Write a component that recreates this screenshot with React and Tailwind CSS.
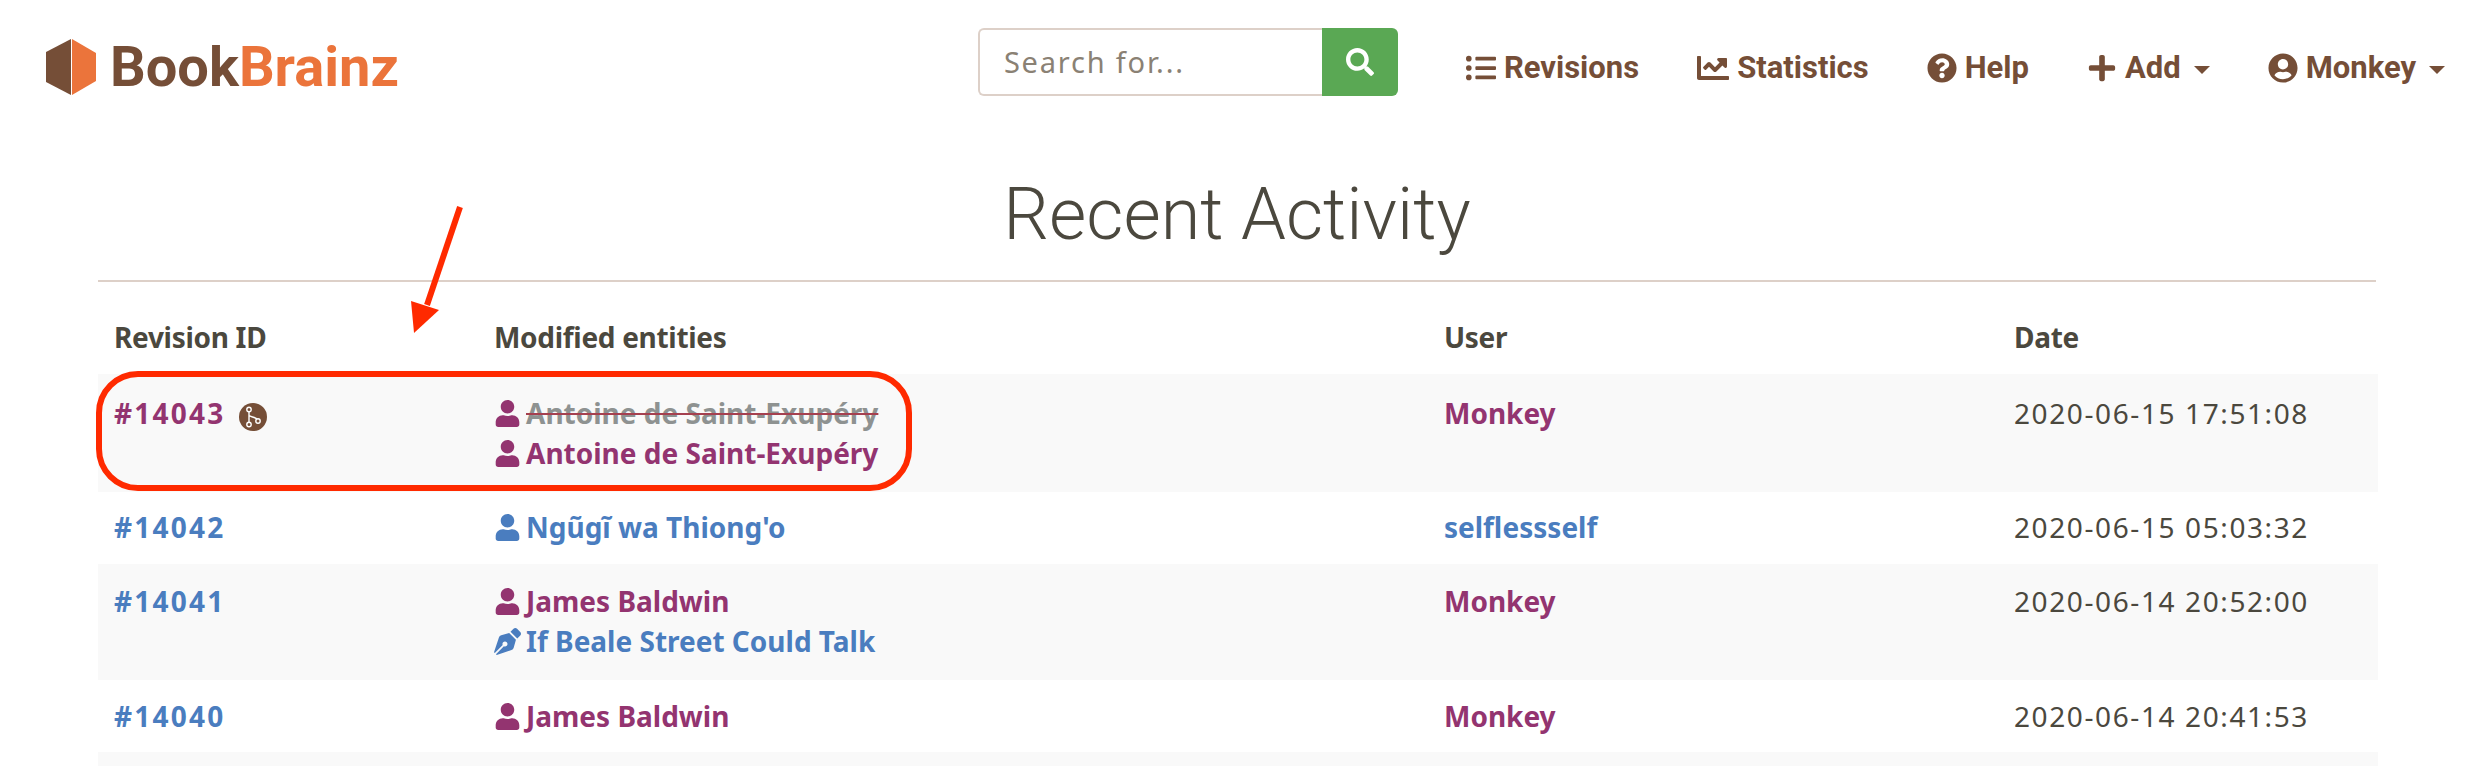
import { FaChartLine, FaListUl, FaPenNib, FaPlus, FaQuestionCircle, FaSearch, FaUser, FaUserCircle } from 'react-icons/fa'

const purple = 'text-[#933470]'
const blue = 'text-[#4a7dbf]'

const rows = [
  {
    id: '#14043',
    idColor: purple,
    merge: true,
    height: 'h-[118px]',
    cell: 'px-[16px] pt-[19px] pb-[13px] align-top',
    entities: [
      { name: 'Antoine de Saint-Exupéry', icon: FaUser, color: purple, deleted: true },
      { name: 'Antoine de Saint-Exupéry', icon: FaUser, color: purple },
    ],
    user: 'Monkey',
    userColor: purple,
    date: '2020-06-15 17:51:08',
    striped: true,
  },
  {
    id: '#14042',
    idColor: blue,
    height: 'h-[72px]',
    cell: 'px-[16px] pt-[15px] pb-[13px] align-top',
    entities: [{ name: "Ngũgĩ wa Thiong'o", icon: FaUser, color: blue }],
    user: 'selflessself',
    userColor: blue,
    date: '2020-06-15 05:03:32',
  },
  {
    id: '#14041',
    idColor: blue,
    height: 'h-[116px]',
    cell: 'px-[16px] pt-[17px] pb-[13px] align-top',
    entities: [
      { name: 'James Baldwin', icon: FaUser, color: purple },
      { name: 'If Beale Street Could Talk', icon: FaPenNib, color: blue },
    ],
    user: 'Monkey',
    userColor: purple,
    date: '2020-06-14 20:52:00',
    striped: true,
  },
  {
    id: '#14040',
    idColor: blue,
    height: 'h-[72px]',
    cell: 'px-[16px] pt-[16px] pb-[13px] align-top',
    entities: [{ name: 'James Baldwin', icon: FaUser, color: purple }],
    user: 'Monkey',
    userColor: purple,
    date: '2020-06-14 20:41:53',
  },
  { id: '', height: 'h-[72px]', cell: 'p-[16px]', entities: [], striped: true },
]

const NavItem = ({ icon: Icon, label, caret, iconSize = 'text-[30px]' }) => (
  <a className="flex items-center gap-[8px] font-bold">
    <Icon className={iconSize} />
    <span>{label}</span>
    {caret && <span className="ml-[5px] mt-[4px] w-0 h-0 border-x-[8px] border-x-transparent border-t-[8px] border-t-[#754e37]" />}
  </a>
)

const MergeBadge = () => (
  <svg width="28" height="28" viewBox="0 0 28 28" className="inline-block ml-[14px] align-[-7px]">
    <circle cx="14" cy="14" r="14" fill="#754e37" />
    <path d="M10 6v15M10 12c0 2.5 9 1.500 9 6" fill="none" stroke="#fff" strokeWidth="1.4" />
    <circle cx="10" cy="6.500" r="2.200" fill="#754e37" stroke="#fff" strokeWidth="1.400" />
    <circle cx="10" cy="21.500" r="2.200" fill="#754e37" stroke="#fff" strokeWidth="1.400" />
    <circle cx="19" cy="18" r="2.200" fill="#754e37" stroke="#fff" strokeWidth="1.400" />
  </svg>
)

const App = () => {
  return (
    <div className="relative w-[2474px] h-[766px] overflow-hidden bg-white text-[#4b483e] font-['Noto_Sans',sans-serif]">
      {/* Navbar */}
      <nav className="flex items-center h-[134px] pl-[46px] font-['Roboto',sans-serif] text-[#754e37]">
        <a className="flex items-center gap-[14px]">
          <svg width="50" height="56" viewBox="0 0 50 56">
            <polygon points="25,0 0,13 0,43 25,56" fill="#754e37" />
            <polygon points="26,0 50,14 50,42 26,56" fill="#eb743b" />
          </svg>
          <span className="text-[56px] leading-none font-bold">
            Book<span className="text-[#eb743b]">Brainz</span>
          </span>
        </a>

        <div className="flex ml-[579px] mt-[-10px] h-[68px] w-[420px]">
          <div className="flex-1 flex items-center pl-[24px] border-2 border-r-0 border-[#ddd0c8] rounded-l-[6px] text-[29px] tracking-[1.8px] text-[#8a8174] font-['Noto_Sans',sans-serif]">
            Search for...
          </div>
          <div className="flex items-center justify-center w-[76px] bg-[#5aa854] rounded-r-[6px] text-white text-[28px]">
            <FaSearch />
          </div>
        </div>

        <div className="flex items-center ml-[68px] mt-[2px] gap-[58px] text-[31px]">
          <NavItem icon={FaListUl} label="Revisions" />
          <NavItem icon={FaChartLine} label="Statistics" iconSize="text-[32px]" />
          <NavItem icon={FaQuestionCircle} label="Help" />
          <NavItem icon={FaPlus} label="Add" caret />
          <NavItem icon={FaUserCircle} label="Monkey" caret />
        </div>
      </nav>

      {/* Page content */}
      <main className="mx-[98px]">
        <h1 className="h-[148px] pt-[38px] text-center font-['Roboto',sans-serif] font-light text-[72px] leading-[86px] border-b-2 border-[#ddd0c8]">
          Recent Activity
        </h1>
        <table className="w-full table-fixed text-[28px] leading-[40px]">
          <colgroup>
            <col className="w-[380px]" />
            <col className="w-[950px]" />
            <col className="w-[570px]" />
            <col className="w-[380px]" />
          </colgroup>
          <thead>
            <tr className="h-[92px] text-left font-bold tracking-[-0.3px]">
              <th className="px-[16px] pt-[18px]">Revision ID</th>
              <th className="px-[16px] pt-[18px]">Modified entities</th>
              <th className="px-[16px] pt-[18px]">User</th>
              <th className="px-[16px] pt-[18px]">Date</th>
            </tr>
          </thead>
          <tbody>
            {rows.map((row, index) => (
              <tr key={index} className={`${row.height} ${row.striped ? 'bg-[#f9f9f9]' : ''}`}>
                <td className={row.cell}>
                  <a className={`font-bold tracking-[2.2px] ${row.idColor}`}>{row.id}</a>
                  {row.merge && <MergeBadge />}
                </td>
                <td className={row.cell}>
                  {row.entities.map((entity, i) => (
                    <div key={i} className={`font-bold ${entity.color}`}>
                      <entity.icon className="inline-block text-[27px] mr-[5px] align-[-3px]" />
                      <span className={entity.deleted ? 'text-[#8e9291] line-through decoration-[#a5404f]' : ''}>{entity.name}</span>
                    </div>
                  ))}
                </td>
                <td className={row.cell}>
                  <a className={`font-bold ${row.userColor}`}>{row.user}</a>
                </td>
                <td className={`${row.cell} tracking-[1.6px]`}>{row.date}</td>
              </tr>
            ))}
          </tbody>
        </table>
      </main>

      {/* Annotation drawn over the screenshot */}
      <div className="absolute left-[96px] top-[371px] w-[816px] h-[120px] border-[6px] border-[#ff2a00] rounded-[42px]" />
      <svg className="absolute left-[400px] top-[200px]" width="70" height="140" viewBox="0 0 70 140">
        <path d="M60 7 L27 105" stroke="#ff2a00" strokeWidth="6" fill="none" />
        <polygon points="14,133 11,101 39,110" fill="#ff2a00" />
      </svg>
    </div>
  )
}

export default App
